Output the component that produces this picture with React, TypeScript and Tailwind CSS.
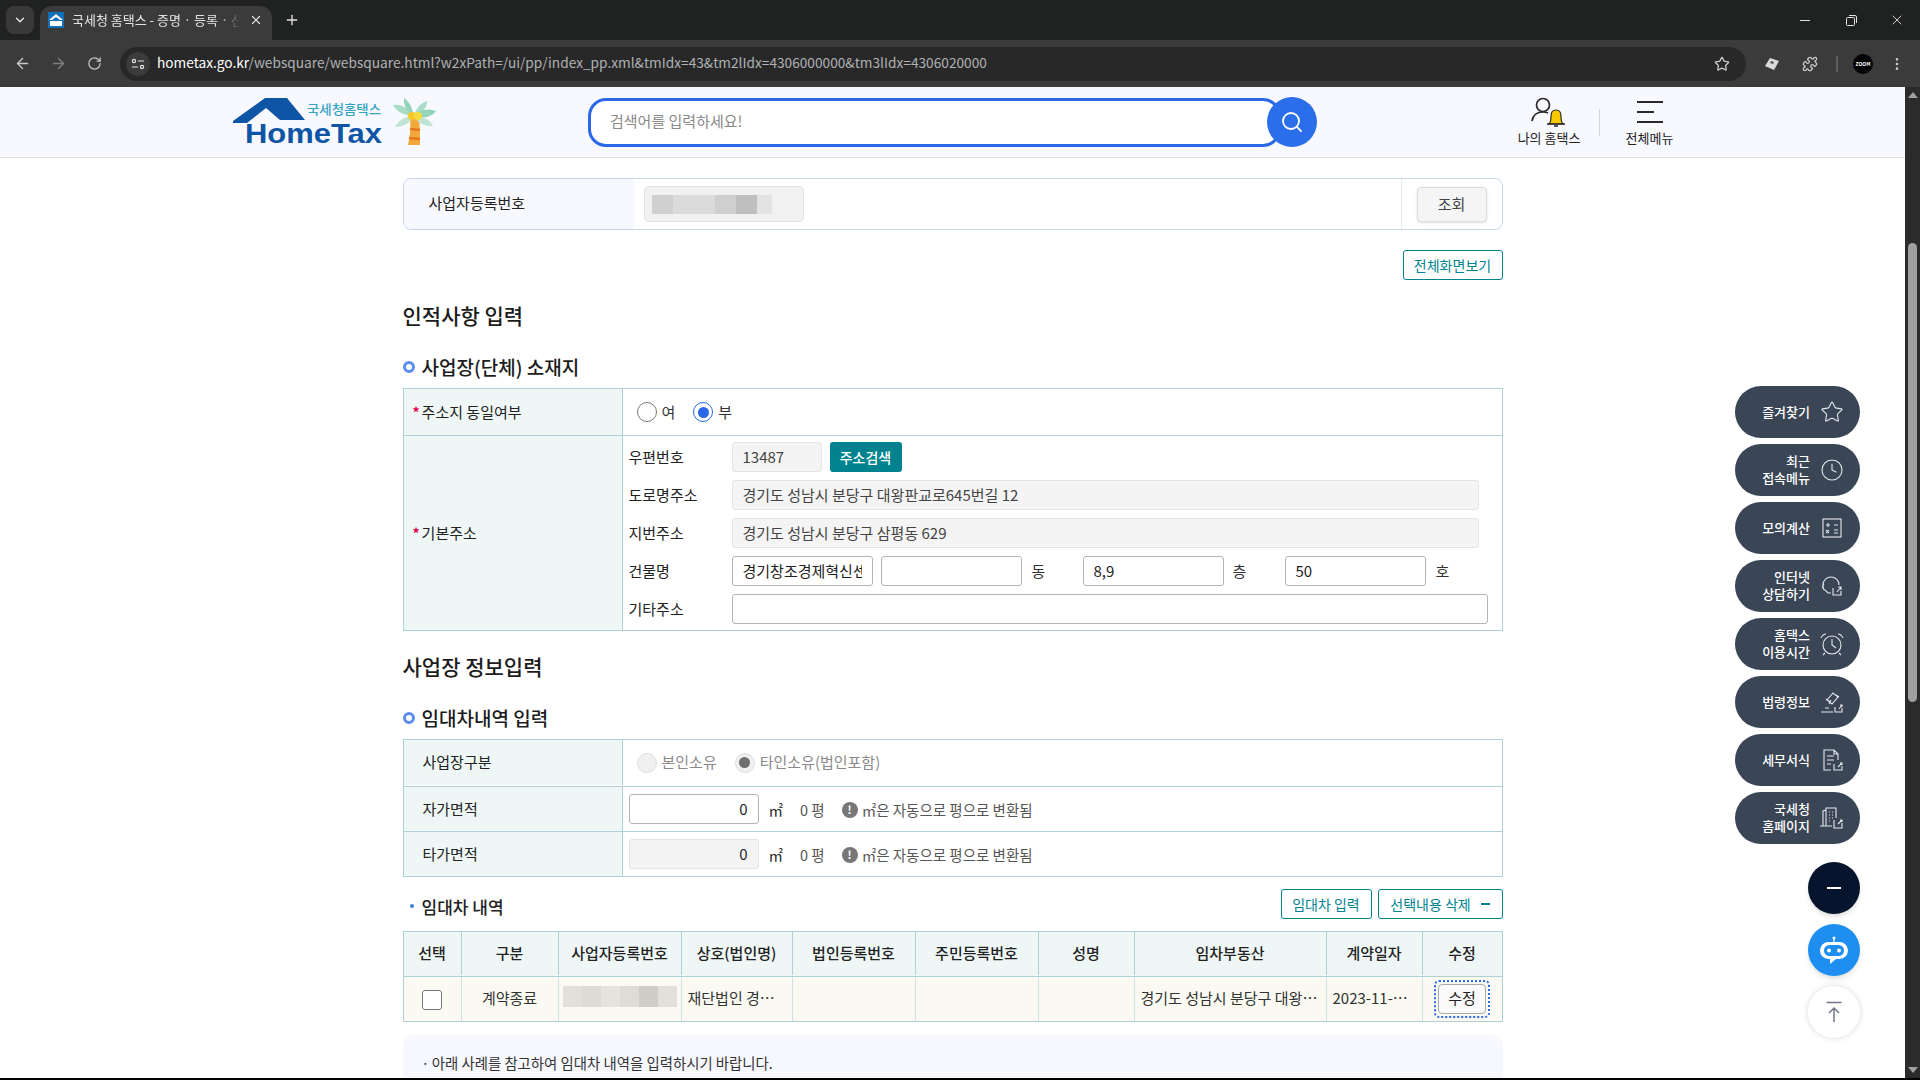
import type { ReactNode } from 'react';
import { ArrowLeft, ArrowRight, ChevronDown, Clock, EllipsisVertical, Plus, Puzzle, RotateCw, Search, Star, X } from 'lucide-react';

const FONT = 'font-["Noto_Sans_CJK_KR","Noto_Sans",sans-serif]';

const BIZ_BLOCKS = ['bg-[#d0d0d0]', 'bg-[#dbdbdb]', 'bg-[#dbdbdb]', 'bg-[#cfcfcf]', 'bg-[#bfbfbf]', 'bg-[#e3e3e3]'];
const ROW_BLOCKS = ['bg-[#e2e0da]', 'bg-[#dcdbd5]', 'bg-[#e4e3dd]', 'bg-[#dedcd6]', 'bg-[#cfcdc7]', 'bg-[#e2e0da]'];

const COLUMNS = [
  { label: '선택', width: 'w-[58px]' },
  { label: '구분', width: 'w-[97px]' },
  { label: '사업자등록번호', width: 'w-[123px]' },
  { label: '상호(법인명)', width: 'w-[111px]' },
  { label: '법인등록번호', width: 'w-[123px]' },
  { label: '주민등록번호', width: 'w-[123px]' },
  { label: '성명', width: 'w-[96px]' },
  { label: '임차부동산', width: 'w-[192px]' },
  { label: '계약일자', width: 'w-[96px]' },
  { label: '수정', width: 'flex-1' },
];

function IconBox({ children }: { children: ReactNode }) {
  return (
    <svg width="26" height="26" viewBox="0 0 26 26" fill="none" stroke="#e4e7ec" strokeWidth="1.1">
      {children}
    </svg>
  );
}

const QUICK_MENU: { lines: string[]; icon: ReactNode }[] = [
  { lines: ['즐겨찾기'], icon: <Star size={24} strokeWidth={1.1} color="#e4e7ec" /> },
  { lines: ['최근', '접속메뉴'], icon: <Clock size={24} strokeWidth={1.1} color="#e4e7ec" /> },
  {
    lines: ['모의계산'],
    icon: (
      <IconBox>
        <rect x="4" y="4" width="18" height="18" />
        <path d="M7 10h4M9 8v4M15 10h4M7 15l3 3M10 15l-3 3M15 15h4M15 18h4" />
      </IconBox>
    ),
  },
  {
    lines: ['인터넷', '상담하기'],
    icon: (
      <IconBox>
        <path d="M5 17c-1-2-1-3-1-5 0-5 4-8 8-8s8 3 8 8M5 11c-2 1-2 5 1 6l3 3h3" />
        <path d="M14 15v7h8v-4M18 19l4-5M19 14h3v3" />
      </IconBox>
    ),
  },
  {
    lines: ['홈택스', '이용시간'],
    icon: (
      <IconBox>
        <circle cx="13" cy="14" r="9" />
        <path d="M13 8v6l4 3M2 7c1-2 3-4 5-4M24 7c-1-2-3-4-5-4M6 22l-2 2M20 22l2 2" />
      </IconBox>
    ),
  },
  {
    lines: ['법령정보'],
    icon: (
      <IconBox>
        <path d="M8 11l6-7 5 4-6 7zM11 13l-4-3M17 6l3 2M12 11l-2 4M2 23h12M6 19h4M16 18v5h7v-4M20 20l3-4M21 16h2v2" />
      </IconBox>
    ),
  },
  {
    lines: ['세무서식'],
    icon: (
      <IconBox>
        <path d="M12 23H5V3h10l4 4v6M15 3v4h4M8 9h7M8 13h7M8 17h4" />
        <path d="M15 17v6h8v-4M19 20l4-4M21 16h2v2" />
      </IconBox>
    ),
  },
  {
    lines: ['국세청', '홈페이지'],
    icon: (
      <IconBox>
        <path d="M1 21h12M4 21V6l3-1M7 21V3h10v10M10 7h1M13 7h1M10 10h1M13 10h1M10 13h1M13 13h1M10 16h1" />
        <path d="M15 15v8h8v-5M19 19l4-4M21 15h2v2" />
      </IconBox>
    ),
  },
];

function BrowserChrome() {
  return (
    <div className={`shrink-0 ${FONT}`}>
      <div className="flex h-[40px] bg-[#202221] pl-[6px] pt-[6px]">
        <div className="flex h-[28px] w-[28px] items-center justify-center rounded-lg bg-[#383838]">
          <ChevronDown size={14} color="#e3e3e3" strokeWidth={2.5} />
        </div>
        <div className="ml-[6px] flex h-[34px] w-[232px] items-center rounded-t-xl bg-[#3b3b3b] pb-[6px] pl-[8px]">
          <svg width="16" height="16" viewBox="0 0 16 16">
            <rect width="16" height="16" fill="#0f6fb8" />
            <path d="M1 8l7-6 7 6h-3L8 5 4 8z" fill="#fff" />
            <rect x="2" y="9" width="12" height="5" fill="#fff" />
          </svg>
          <span className="ml-[8px] w-[168px] overflow-hidden whitespace-nowrap text-[13px] text-[#e3e3e3] [mask-image:linear-gradient(to_right,black_88%,transparent)]">국세청 홈택스 - 증명 · 등록 · 신청</span>
          <X size={14} color="#e3e3e3" className="ml-[9px]" />
        </div>
        <Plus size={16} color="#e3e3e3" className="ml-[12px] mt-[6px]" />
        <div className="ml-auto flex h-[28px] items-center text-[#e3e3e3]">
          <div className="flex w-[46px] justify-center">
            <div className="h-px w-[10px] bg-[#e3e3e3]" />
          </div>
          <div className="flex w-[46px] justify-center">
            <svg width="11" height="11" viewBox="0 0 11 11" fill="none" stroke="#e3e3e3">
              <rect x="0.5" y="2.5" width="8" height="8" rx="1" />
              <path d="M3 0.5h6a1.5 1.5 0 0 1 1.5 1.5v6" />
            </svg>
          </div>
          <div className="flex w-[46px] justify-center">
            <X size={16} strokeWidth={1.3} />
          </div>
        </div>
      </div>
      <div className="flex h-[47px] items-center bg-[#3b3b3b] pl-[14px] pr-[12px]">
        <ArrowLeft size={17} color="#c7c7c7" />
        <ArrowRight size={17} color="#7d7d7d" className="ml-[19px]" />
        <RotateCw size={15} color="#c7c7c7" className="ml-[20px]" />
        <div className="ml-[18px] flex h-[34px] w-[1626px] items-center rounded-full bg-[#282828] pl-[6px]">
          <div className="flex h-[24px] w-[24px] items-center justify-center rounded-full bg-[#3b3b3b]">
            <svg width="14" height="12" viewBox="0 0 14 12" fill="none" stroke="#e3e3e3" strokeWidth="1.2">
              <circle cx="3" cy="3" r="1.6" />
              <path d="M7 3h6M1 9h6" />
              <circle cx="11" cy="9" r="1.6" />
            </svg>
          </div>
          <span className="mb-[2px] ml-[7px] text-[13.7px] text-[#aeb1b5]">
            <span className="text-white">hometax.go.kr</span>/websquare/websquare.html?w2xPath=/ui/pp/index_pp.xml&tmIdx=43&tm2lIdx=4306000000&tm3lIdx=4306020000
          </span>
          <Star size={16} color="#c7c7c7" className="ml-auto mr-[16px]" />
        </div>
        <svg width="16" height="14" viewBox="0 0 16 14" className="ml-[18px]">
          <path d="M1 9l5-8 9 3-5 9z" fill="#d9d9d9" />
          <path d="M7 4l3 1-1 2-3-1z" fill="#555" />
        </svg>
        <Puzzle size={16} color="#c7c7c7" className="ml-[22px]" />
        <div className="ml-[18px] h-[16px] w-[2px] bg-[#5d5d5d]" />
        <div className="ml-[15px] flex h-[20px] w-[20px] items-center justify-center rounded-full bg-black text-[5px] font-bold text-white">ZOOM</div>
        <EllipsisVertical size={16} color="#c7c7c7" className="ml-[16px]" />
      </div>
    </div>
  );
}

function HomeTaxLogo() {
  return (
    <svg width="206" height="52" viewBox="0 0 206 52" className="shrink-0">
      <path d="M33 2H55L73 24H48L34 12 15 27H1V25z" fill="#0f55a5" />
      <text x="13" y="47" fontFamily="Liberation Sans" fontWeight="700" fontSize="28" textLength="137" lengthAdjust="spacingAndGlyphs" fill="#0f55a5">HomeTax</text>
      <text x="75" y="18" fontFamily="Noto Sans CJK KR" fontWeight="500" fontSize="13" textLength="74" lengthAdjust="spacingAndGlyphs" fill="#35a3c4">국세청홈택스</text>
      <path d="M178 22h9c1 9 1 18 1 27h-12c2-9 3-18 2-27z" fill="#f2a93b" />
      <path d="M177 42l11 1M178 33l10 1" stroke="#e8761f" strokeWidth="2.5" />
      <path d="M182 20C176 12 170 8 161 9c4 7 12 11 21 11z" fill="#a9dcc6" />
      <path d="M182 20C176 20 168 22 163 31c8 0 15-4 19-11z" fill="#bfe3d5" />
      <path d="M182 20C180 12 178 6 172 2c-1 7 3 14 10 18z" fill="#93d4bb" />
      <path d="M182 20c2-7 6-13 13-15 0 7-5 13-13 15z" fill="#a9dcc6" />
      <path d="M182 20c7-7 14-8 22-5-4 6-13 8-22 5z" fill="#93d4bb" />
      <path d="M182 20c7 0 15 2 19 10-8 1-15-3-19-10z" fill="#bfe3d5" />
      <circle cx="180" cy="20" r="4" fill="#f5c82a" />
      <circle cx="186" cy="20" r="4" fill="#f8dc3c" />
    </svg>
  );
}

function SiteHeader() {
  return (
    <header className="flex h-[71px] shrink-0 items-center border-b border-[#e0e2e8] bg-[#f8f9fe] pl-[232px]">
      <HomeTaxLogo />
      <div className="ml-[150px] flex h-[49px] w-[693px] items-center rounded-[18px] border-[3px] border-[#2a68e8] bg-white pb-[2px] pl-[19px] text-[15px] text-[#8a8a8a]">검색어를 입력하세요!</div>
      <div className="relative -ml-[14px] flex h-[50px] w-[50px] items-center justify-center rounded-full bg-[#2b6ee9]">
        <Search size={24} color="#fff" strokeWidth={1.8} />
      </div>
      <div className="mb-[2px] ml-[182px] flex w-[100px] flex-col items-center">
        <svg width="34" height="32" viewBox="0 0 34 32" fill="none" className="-translate-x-[1px]">
          <circle cx="12" cy="9" r="6.5" stroke="#2a2a2a" strokeWidth="1.7" />
          <path d="M1 25c1-6 5-9 11-9 2 0 3 0 5 1" stroke="#2a2a2a" strokeWidth="1.7" />
          <path d="M18 28c2-2 2-4 2-8 0-4 2-6 5-6s5 2 5 6c0 4 0 6 2 8z" fill="#f5c800" stroke="#2a2a2a" strokeWidth="1.2" />
          <path d="M16 28h18M23 30h4" stroke="#2a2a2a" strokeWidth="1.4" />
        </svg>
        <span className="mt-[1px] text-[13px] leading-[18px] text-[#222]">나의 홈택스</span>
      </div>
      <div className="h-[27px] w-px bg-[#d5d7db]" />
      <div className="mb-[2px] ml-[1px] flex w-[97px] flex-col items-center">
        <div className="flex h-[32px] w-[26px] flex-col justify-center gap-[8px]">
          <div className="h-[2px] w-full bg-[#2a2a2a]" />
          <div className="h-[2px] w-[17px] bg-[#2a2a2a]" />
          <div className="h-[2px] w-full bg-[#2a2a2a]" />
        </div>
        <span className="mt-[1px] text-[13px] leading-[18px] text-[#222]">전체메뉴</span>
      </div>
    </header>
  );
}

function SectionTitle({ text, className }: { text: string; className: string }) {
  return (
    <div className={`flex h-[28px] items-center ${className}`}>
      <div className="h-[12px] w-[12px] rounded-full border-[3px] border-[#5b8def] bg-white" />
      <h4 className="ml-[7px] text-[19px] font-medium text-[#1c1c1c]">{text}</h4>
    </div>
  );
}

function Field({ value, readOnly, className }: { value: string; readOnly?: boolean; className: string }) {
  const tone = readOnly ? 'border-[#e4e4e4] bg-[#f4f4f4] text-[#444]' : 'border-[#b5b5b5] bg-white text-[#222]';
  return (
    <div className={`flex h-[30px] shrink-0 items-center rounded-[3px] border px-[10px] text-[15px] ${tone} ${className}`}>
      <div className="min-w-0 overflow-hidden whitespace-nowrap">{value}</div>
    </div>
  );
}

function AddressRow({ label, children }: { label: string; children: ReactNode }) {
  return (
    <div className="flex h-[38px] items-center">
      <span className="w-[103px] pt-[1px] text-[15px] text-[#222]">{label}</span>
      {children}
    </div>
  );
}

function Radio({ checked, disabled, label, className }: { checked?: boolean; disabled?: boolean; label: string; className?: string }) {
  const ring = disabled ? 'border-[#dedede] bg-[#f0f0f0]' : checked ? 'border-[#2a68e8] bg-white' : 'border-[#777] bg-white';
  const dot = disabled ? 'bg-[#707070]' : 'bg-[#2a68e8]';
  return (
    <div className={`flex items-center ${className ?? ''}`}>
      <div className={`flex h-[20px] w-[20px] items-center justify-center rounded-full border ${ring}`}>
        {checked && <div className={`h-[11px] w-[11px] rounded-full ${dot}`} />}
      </div>
      <span className={`ml-[5px] text-[15px] ${disabled ? 'text-[#8a8a8a]' : 'text-[#333]'}`}>{label}</span>
    </div>
  );
}

function AreaCell({ readOnly }: { readOnly?: boolean }) {
  return (
    <div className="flex items-center text-[14.5px] text-[#555]">
      <div className={`flex h-[30px] w-[130px] items-center justify-end rounded-[3px] border pr-[10px] text-[15px] text-[#222] ${readOnly ? 'border-[#e4e4e4] bg-[#f4f4f4]' : 'border-[#b5b5b5] bg-white'}`}>0</div>
      <span className="ml-[10px] pt-[1px] text-[#222]">㎡</span>
      <span className="ml-[17px] pt-[1px]">0 평</span>
      <div className="ml-[17px] mt-[1px] flex h-[16px] w-[16px] items-center justify-center rounded-full bg-[#777] text-[11px] font-bold leading-none text-white">!</div>
      <span className="ml-[4px] pt-[1px]">㎡은 자동으로 평으로 변환됨</span>
    </div>
  );
}

function TableLabel({ required, children }: { required?: boolean; children: ReactNode }) {
  return (
    <div className={`flex w-[219px] shrink-0 items-center border-r border-[#aed0d6] bg-[#eef7f6] text-[15px] text-[#222] ${required ? 'pl-[9px]' : 'pl-[19px]'}`}>
      {required && <span className="mr-[2px] text-[14px] font-bold leading-none text-[#e6004d]">*</span>}
      {children}
    </div>
  );
}

function LeaseTable() {
  return (
    <div className="mt-[12px] border border-[#aed0d6] text-[15px]">
      <div className="flex h-[45px] border-b border-[#aed0d6] bg-[#eef7f6] pb-[1px] font-medium text-[#222]">
        {COLUMNS.map(({ label, width }, i) => (
          <div key={label} className={`flex items-center justify-center ${width} ${i < COLUMNS.length - 1 ? 'border-r border-[#aed0d6]' : ''}`}>
            {label}
          </div>
        ))}
      </div>
      <div className="flex h-[44px] bg-[#fafaf2] text-[#333]">
        <div className="flex w-[58px] items-center justify-center border-r border-[#cfe3e6]">
          <div className="mt-[1px] h-[20px] w-[20px] rounded-[3px] border border-[#777] bg-white" />
        </div>
        <div className="flex w-[97px] items-center justify-center border-r border-[#cfe3e6] pb-[2px]">계약종료</div>
        <div className="flex w-[123px] items-center border-r border-[#cfe3e6] pl-[4px]">
          <div className="mb-[6px] flex h-[21px]">
            {ROW_BLOCKS.map((tone, i) => (
              <div key={i} className={`h-full w-[19px] ${tone}`} />
            ))}
          </div>
        </div>
        <div className="flex w-[111px] items-center whitespace-nowrap border-r border-[#cfe3e6] pb-[2px] pl-[6px]">재단법인 경…</div>
        <div className="w-[123px] border-r border-[#cfe3e6]" />
        <div className="w-[123px] border-r border-[#cfe3e6]" />
        <div className="w-[96px] border-r border-[#cfe3e6]" />
        <div className="flex w-[192px] items-center whitespace-nowrap border-r border-[#cfe3e6] pb-[2px] pl-[6px]">경기도 성남시 분당구 대왕…</div>
        <div className="flex w-[96px] items-center whitespace-nowrap border-r border-[#cfe3e6] pb-[2px] pl-[6px]">2023-11-…</div>
        <div className="flex flex-1 items-center justify-center pb-[1px]">
          <div className="rounded-[5px] border-2 border-dotted border-[#2a68e8] p-[2px]">
            <div className="flex h-[30px] w-[48px] items-center justify-center rounded-[4px] border border-[#aaa] bg-[#fafafa] text-[#222]">수정</div>
          </div>
        </div>
      </div>
    </div>
  );
}

function QuickMenu() {
  return (
    <aside className="absolute right-[60px] top-[299px] flex w-[125px] flex-col items-end">
      {QUICK_MENU.map(({ lines, icon }) => (
        <div key={lines.join('')} className="mb-[6px] flex h-[52px] w-[125px] items-center justify-end rounded-full bg-[#3a4556] pr-[15px]">
          <div className="mb-[2px] text-right text-[13px] font-medium leading-[17px] text-white">
            {lines.map((line) => (
              <div key={line}>{line}</div>
            ))}
          </div>
          <div className="ml-[9px] flex w-[26px] justify-center">{icon}</div>
        </div>
      ))}
      <div className="mt-[12px] flex h-[52px] w-[52px] items-center justify-center rounded-full bg-[#06142e] shadow-md">
        <div className="h-[2px] w-[14px] bg-white" />
      </div>
      <div className="mt-[10px] flex h-[52px] w-[52px] items-center justify-center rounded-full bg-[#1e8ef0] shadow-md">
        <svg width="30" height="30" viewBox="0 0 30 30">
          <circle cx="15" cy="3" r="1.5" fill="#fff" />
          <rect x="14.4" y="3" width="1.2" height="4" fill="#fff" />
          <rect x="1" y="7" width="28" height="17" rx="8.5" fill="#fff" />
          <path d="M11 24v5l6-5z" fill="#fff" />
          <rect x="5" y="10" width="20" height="11" rx="5.5" fill="#1e8ef0" />
          <circle cx="10" cy="15.5" r="2" fill="#fff" />
          <circle cx="20" cy="15.5" r="2" fill="#fff" />
        </svg>
      </div>
      <div className="mt-[10px] flex h-[52px] w-[52px] items-center justify-center rounded-full bg-white shadow-[0_0_6px_rgba(0,0,0,0.15)]">
        <svg width="18" height="22" viewBox="0 0 18 22" fill="none" stroke="#74788c" strokeWidth="1.5">
          <path d="M1.5 1.5h15M9 21V8M4 12l5-5 5 5" />
        </svg>
      </div>
    </aside>
  );
}

function Scrollbar() {
  return (
    <div className="flex w-[15px] shrink-0 flex-col items-center bg-[#2b2b2b]">
      <div className="mt-[5px] h-0 w-0 border-x-[5px] border-b-[6px] border-x-transparent border-b-[#a0a0a0]" />
      <div className="mt-[145px] h-[459px] w-[9px] rounded-full bg-[#9f9f9f]" />
      <div className="mt-auto mb-[5px] h-0 w-0 border-x-[5px] border-t-[6px] border-x-transparent border-t-[#a0a0a0]" />
    </div>
  );
}

export default function App() {
  return (
    <div className={`flex h-screen w-[1920px] flex-col overflow-hidden border-b-2 border-black bg-white ${FONT}`}>
      <BrowserChrome />
      <div className="relative flex min-h-0 flex-1">
        <div className="flex min-w-0 flex-1 flex-col">
          <SiteHeader />
          <main className="min-h-0 flex-1 overflow-hidden">
            <div className="mx-auto w-[1100px] pt-[20px]">
              <div className="flex h-[52px] items-center overflow-hidden rounded-[8px] border border-[#c5d6ec]">
                <div className="flex h-full w-[231px] items-center bg-[#f8f9fe] pb-[2px] pl-[25px] text-[15px] text-[#222]">사업자등록번호</div>
                <div className="ml-[9px] flex h-[36px] w-[160px] items-center rounded-[4px] border border-[#e4e4e4] bg-[#f1f1f1] pl-[7px]">
                  {BIZ_BLOCKS.map((tone, i) => (
                    <div key={i} className={`h-[19px] ${i === 5 ? 'w-[15px]' : 'w-[21px]'} ${tone}`} />
                  ))}
                </div>
                <div className="ml-auto flex h-full w-[101px] items-center justify-center border-l border-[#e4e7ec]">
                  <div className="flex h-[35px] w-[70px] items-center justify-center rounded-[4px] border border-[#ddd] bg-[#f5f5f5] text-[15px] text-[#444] shadow-sm">조회</div>
                </div>
              </div>

              <div className="mt-[20px] flex justify-end">
                <div className="flex h-[30px] w-[100px] items-center justify-center rounded-[3px] border border-[#00838f] text-[14px] text-[#00838f]">전체화면보기</div>
              </div>

              <h3 className="mt-[21px] flex h-[30px] items-center text-[21px] font-medium text-[#1c1c1c]">인적사항 입력</h3>
              <SectionTitle text="사업장(단체) 소재지" className="mt-[22px]" />

              <div className="mt-[7px] border border-[#aed0d6]">
                <div className="flex h-[47px] border-b border-[#aed0d6]">
                  <TableLabel required>주소지 동일여부</TableLabel>
                  <div className="flex items-center pl-[14px]">
                    <Radio label="여" />
                    <Radio label="부" checked className="ml-[18px]" />
                  </div>
                </div>
                <div className="flex h-[194px]">
                  <TableLabel required>기본주소</TableLabel>
                  <div className="flex flex-1 flex-col justify-center pl-[6px]">
                    <AddressRow label="우편번호">
                      <Field value="13487" readOnly className="w-[90px]" />
                      <div className="ml-[8px] flex h-[30px] w-[72px] items-center justify-center rounded-[3px] bg-[#00838f] text-[14px] font-medium text-white">주소검색</div>
                    </AddressRow>
                    <AddressRow label="도로명주소">
                      <Field value="경기도 성남시 분당구 대왕판교로645번길 12" readOnly className="w-[747px]" />
                    </AddressRow>
                    <AddressRow label="지번주소">
                      <Field value="경기도 성남시 분당구 삼평동 629" readOnly className="w-[747px]" />
                    </AddressRow>
                    <AddressRow label="건물명">
                      <Field value="경기창조경제혁신센터" className="w-[141px]" />
                      <Field value="" className="ml-[8px] w-[141px]" />
                      <span className="ml-[10px] w-[51px] text-[15px] text-[#333]">동</span>
                      <Field value="8,9" className="w-[141px]" />
                      <span className="ml-[9px] w-[52px] text-[15px] text-[#333]">층</span>
                      <Field value="50" className="w-[141px]" />
                      <span className="ml-[10px] text-[15px] text-[#333]">호</span>
                    </AddressRow>
                    <AddressRow label="기타주소">
                      <Field value="" className="w-[756px]" />
                    </AddressRow>
                  </div>
                </div>
              </div>

              <h3 className="mt-[21px] flex h-[30px] items-center text-[21px] font-medium text-[#1c1c1c]">사업장 정보입력</h3>
              <SectionTitle text="임대차내역 입력" className="mt-[22px]" />

              <div className="mt-[7px] border border-[#aed0d6]">
                <div className="flex h-[47px] border-b border-[#aed0d6] pb-[1px]">
                  <TableLabel>사업장구분</TableLabel>
                  <div className="flex items-center pl-[14px]">
                    <Radio label="본인소유" disabled />
                    <Radio label="타인소유(법인포함)" checked disabled className="ml-[18px]" />
                  </div>
                </div>
                <div className="flex h-[45px] border-b border-[#aed0d6]">
                  <TableLabel>자가면적</TableLabel>
                  <div className="flex items-center pl-[6px]">
                    <AreaCell />
                  </div>
                </div>
                <div className="flex h-[44px]">
                  <TableLabel>타가면적</TableLabel>
                  <div className="flex items-center pl-[6px]">
                    <AreaCell readOnly />
                  </div>
                </div>
              </div>

              <div className="mt-[12px] flex h-[30px] items-center">
                <div className="ml-[7px] mt-[4px] h-[4px] w-[4px] rounded-full bg-[#3d7fd6]" />
                <h5 className="ml-[8px] mt-[5px] text-[17px] font-medium text-[#222]">임대차 내역</h5>
                <div className="ml-auto flex h-[30px] w-[91px] items-center justify-center rounded-[3px] border border-[#00838f] text-[14px] text-[#00838f]">임대차 입력</div>
                <div className="ml-[6px] flex h-[30px] w-[125px] items-center justify-center rounded-[3px] border border-[#00838f] text-[14px] text-[#00838f]">
                  선택내용 삭제
                  <div className="ml-[10px] h-[2px] w-[9px] bg-[#00838f]" />
                </div>
              </div>

              <LeaseTable />

              <div className="mt-[13px] h-[80px] rounded-t-[10px] bg-[#f7f8fd] pl-[16px] pt-[17px] text-[14.4px] text-[#333]">ㆍ아래 사례를 참고하여 임대차 내역을 입력하시기 바랍니다.</div>
            </div>
          </main>
        </div>
        <Scrollbar />
        <QuickMenu />
      </div>
    </div>
  );
}
